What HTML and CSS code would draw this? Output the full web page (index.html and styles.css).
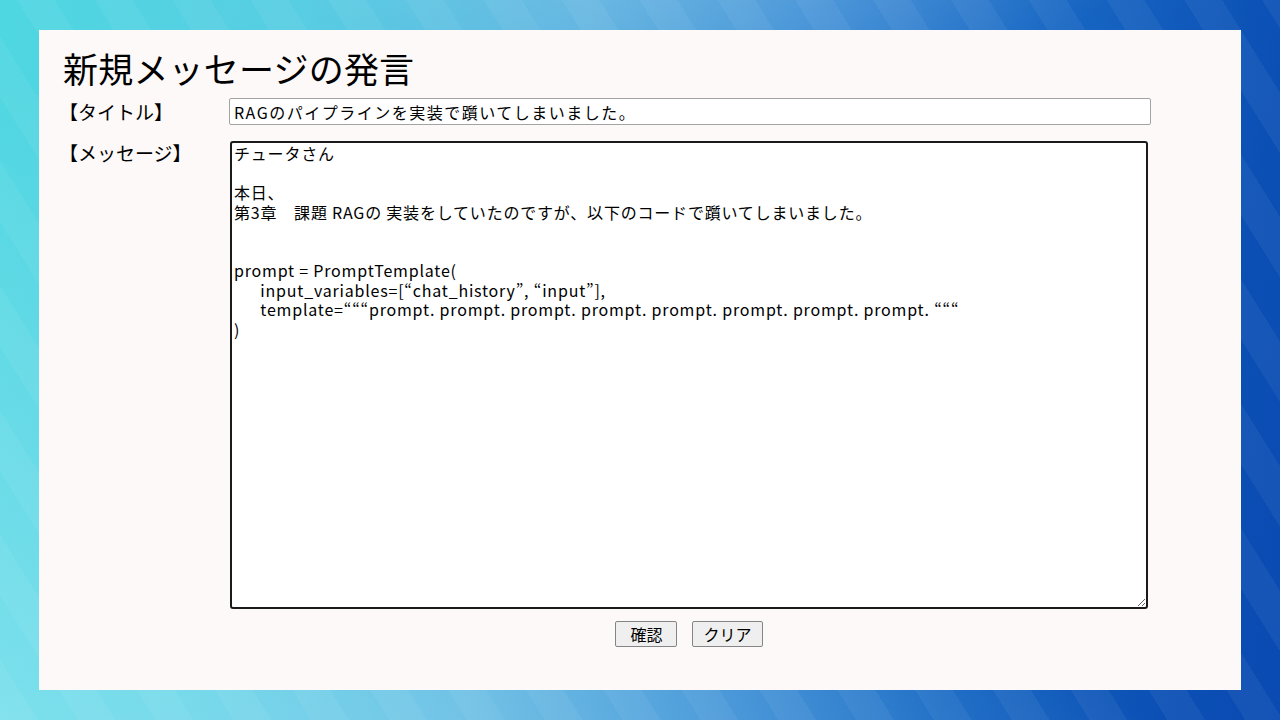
FILE: index.html
```html
<!DOCTYPE html>
<html lang="ja">
<head>
<meta charset="utf-8">
<title>新規メッセージの発言</title>
<link rel="stylesheet" href="styles.css">
</head>
<body>
<main class="panel">
  <h1 class="title">新規メッセージの発言</h1>
  <form class="form">
    <label class="label" for="t">【タイトル】</label>
    <input class="input" id="t" type="text" value="RAGのパイプラインを実装で躓いてしまいました。">
    <label class="label label-top" for="m">【メッセージ】</label>
    <div class="msg-col">
      <textarea class="textarea" id="m">チュータさん

本日、
第3章　課題 RAGの 実装をしていたのですが、以下のコードで躓いてしまいました。


prompt = PromptTemplate(
      input_variables=[“chat_history”, “input”],
      template=“““prompt. prompt. prompt. prompt. prompt. prompt. prompt. prompt. “““
)
</textarea>
      <div class="buttons">
        <button type="button" class="btn">確認</button>
        <button type="reset" class="btn">クリア</button>
      </div>
    </div>
  </form>
</main>
</body>
</html>
```
FILE: styles.css
```css
html, body {
  margin: 0;
  padding: 0;
  width: 1280px;
  height: 720px;
  overflow: hidden;
}
body {
  font-family: "Noto Sans CJK JP", "Noto Sans", sans-serif;
  color: #000;
  background:
    repeating-linear-gradient(58deg, rgba(255,255,255,0.05) 0 32px, rgba(255,255,255,0) 32px 66px),
    radial-gradient(ellipse 650px 240px at 55% -10%, rgba(255,255,255,0.16), rgba(255,255,255,0) 70%),
    linear-gradient(to top right, rgba(175,240,248,0.45) 0%, rgba(175,240,248,0) 45%),
    linear-gradient(100deg, #4ed7e1 0%, #58cde3 22%, #5cb2e0 42%, #3a8ad4 60%, #1766c3 76%, #0b4fb4 92%, #0a4ab2 100%);
  padding: 30px 39px;
  box-sizing: border-box;
}
.panel {
  background: #fdf9f8;
  width: 1202px;
  height: 660px;
  box-sizing: border-box;
  padding: 18px 24px 0;
}
.title {
  margin: 0;
  font-size: 35px;
  line-height: 40px;
  font-weight: 400;
  letter-spacing: 0.2px;
}
.form {
  display: grid;
  grid-template-columns: 166px 922px;
  row-gap: 16px;
  margin-top: 10px;
}
.label {
  font-size: 19px;
  line-height: 27px;
  align-self: center;
  margin-left: -4px;
  white-space: nowrap;
}
.label-top {
  align-self: start;
  line-height: 24px;
}
.input {
  width: 922px;
  height: 27px;
  box-sizing: border-box;
  border: 1px solid #a3a3a3;
  border-radius: 2px;
  background: #fff;
  padding: 0 4px;
  font-family: inherit;
  font-size: 16px;
  letter-spacing: 1.5px;
  color: #000;
}
.msg-col {
  display: flex;
  flex-direction: column;
  padding-left: 1px;
}
.textarea {
  width: 918px;
  height: 468px;
  box-sizing: border-box;
  border: 2px solid #1a1a1a;
  border-radius: 3px;
  background: #fff;
  padding: 1px 2px;
  font-family: inherit;
  font-size: 16px;
  line-height: 19.5px;
  letter-spacing: 0.8px;
  color: #000;
  resize: both;
  outline: none;
}
.buttons {
  width: 918px;
  display: flex;
  justify-content: center;
  gap: 15px;
  margin-top: 12px;
}
.btn {
  height: 26px;
  min-width: 62px;
  padding: 0 10px;
  font-family: inherit;
  font-size: 16px;
  line-height: 24px;
  background: #efefef;
  border: 1px solid #858585;
  border-radius: 2px;
  color: #000;
}
```
